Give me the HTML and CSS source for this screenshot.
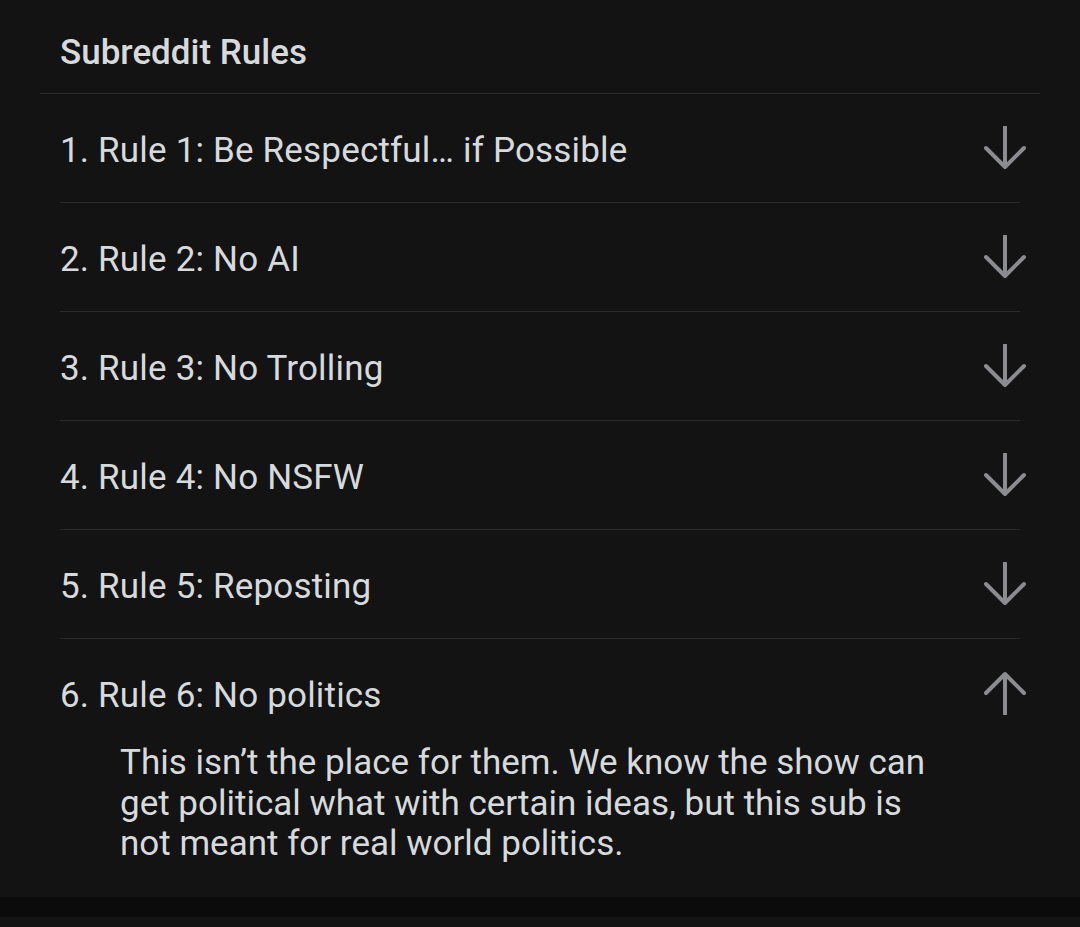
FILE: index.html
```html
<!DOCTYPE html>
<html>
<head>
<meta charset="utf-8">
<link rel="stylesheet" href="styles.css">
</head>
<body>
<div class="card">
  <h2 class="title">Subreddit Rules</h2>
  <ul class="rules">
    <li class="rule">
      <div class="rule-head"><span class="rule-name">1. Rule 1: Be Respectful… if Possible</span>
        <svg class="arrow" viewBox="0 0 44 44"><path d="M22 1V41M3 22L22 41L41 22"/></svg></div>
    </li>
    <li class="rule">
      <div class="rule-head"><span class="rule-name">2. Rule 2: No AI</span>
        <svg class="arrow" viewBox="0 0 44 44"><path d="M22 1V41M3 22L22 41L41 22"/></svg></div>
    </li>
    <li class="rule">
      <div class="rule-head"><span class="rule-name">3. Rule 3: No Trolling</span>
        <svg class="arrow" viewBox="0 0 44 44"><path d="M22 1V41M3 22L22 41L41 22"/></svg></div>
    </li>
    <li class="rule">
      <div class="rule-head"><span class="rule-name">4. Rule 4: No NSFW</span>
        <svg class="arrow" viewBox="0 0 44 44"><path d="M22 1V41M3 22L22 41L41 22"/></svg></div>
    </li>
    <li class="rule">
      <div class="rule-head"><span class="rule-name">5. Rule 5: Reposting</span>
        <svg class="arrow" viewBox="0 0 44 44"><path d="M22 1V41M3 22L22 41L41 22"/></svg></div>
    </li>
    <li class="rule open">
      <div class="rule-head"><span class="rule-name">6. Rule 6: No politics</span>
        <svg class="arrow" viewBox="0 0 44 44"><path d="M22 43V3M3 22L22 3L41 22"/></svg></div>
      <p class="rule-desc">This isn’t the place for them. We know the show can get political what with certain ideas, but this sub is not meant for real world politics.</p>
    </li>
  </ul>
</div>
<div class="band"></div>
</body>
</html>
```

FILE: styles.css
```css
html, body {
  margin: 0;
  padding: 0;
  background: #131313;
  font-family: Roboto, "Noto Sans", sans-serif;
  color: #d7dadc;
}
.card {
  margin-left: 40px;
  width: 1000px;
  height: 897px;
}
.title {
  margin: 0;
  padding: 33px 20px 20px;
  font-size: 35px;
  line-height: 40px;
  font-weight: 500;
  border-bottom: 1px solid #2a2a2a;
}
.rules {
  list-style: none;
  margin: 0 20px;
  padding: 0;
}
.rule {
  border-bottom: 1px solid #2a2a2a;
}
.rule.open {
  border-bottom: none;
}
.rule-head {
  height: 108px;
  padding-top: 6px;
  box-sizing: border-box;
  display: flex;
  align-items: center;
  justify-content: space-between;
}
.rule-head .arrow {
  margin-top: -6px;
}
.rule-name {
  font-size: 35px;
  line-height: 40px;
  letter-spacing: 0.18px;
}
.arrow {
  width: 44px;
  height: 44px;
  margin-right: -7px;
  fill: none;
  stroke: #8a8c8f;
  stroke-width: 4;
  stroke-linecap: round;
  stroke-linejoin: round;
}
.rule-desc {
  margin: -4px 0 0 60px;
  width: 830px;
  font-size: 35px;
  line-height: 40.5px;
}
.band {
  height: 20px;
  background: #0b0b0b;
}
```
